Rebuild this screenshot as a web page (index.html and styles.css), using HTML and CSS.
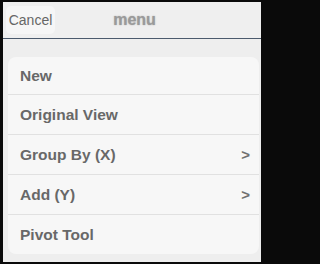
FILE: index.html
```html
<!DOCTYPE html>
<html>
<head>
<meta charset="utf-8">
<link rel="stylesheet" href="styles.css">
</head>
<body>
<div class="screen">
  <div class="header">
    <div class="cancel">Cancel</div>
    <div class="title">menu</div>
  </div>
  <div class="card">
    <div class="row first"><span>New</span></div>
    <div class="row"><span>Original View</span></div>
    <div class="row"><span>Group By (X)</span><span class="chev">&gt;</span></div>
    <div class="row"><span>Add (Y)</span><span class="chev">&gt;</span></div>
    <div class="row"><span>Pivot Tool</span></div>
  </div>
</div>
</body>
</html>
```
FILE: styles.css
```css
html, body {
  margin: 0;
  padding: 0;
  background: #0a0a0a;
}
body {
  width: 263px;
  height: 264px;
  overflow: hidden;
}
.screen {
  margin: 2px 2px 2px 3px;
  width: 258px;
  height: 260px;
  background: #eeeeee;
  font-family: "Liberation Sans", Arial, sans-serif;
  overflow: hidden;
}
.header {
  display: flex;
  align-items: center;
  height: 36px;
  border-bottom: 1px solid #4b5a6d;
  background: #efefef;
}
.cancel {
  margin-left: 3px;
  width: 49px;
  height: 28px;
  line-height: 29px;
  text-align: center;
  background: #f6f6f6;
  border-radius: 5px;
  font-size: 14px;
  color: #666666;
}
.title {
  flex: 1;
  margin-right: 47px;
  text-align: center;
  font-size: 16px;
  font-weight: bold;
  color: #9a9a9a;
  text-shadow: 0 0 1.5px #a8a8a8;
}
.card {
  margin: 18px 2px 0 5px;
  background: #f7f7f7;
  border-radius: 8px;
}
.row {
  display: flex;
  justify-content: space-between;
  align-items: center;
  height: 39px;
  padding: 0 9px 0 12px;
  border-top: 1px solid #e1e1e1;
  font-size: 15.5px;
  font-weight: bold;
  color: #686868;
}
.row.first {
  height: 37px;
  border-top: none;
}
.chev {
  font-size: 15px;
  color: #707070;
}
```
